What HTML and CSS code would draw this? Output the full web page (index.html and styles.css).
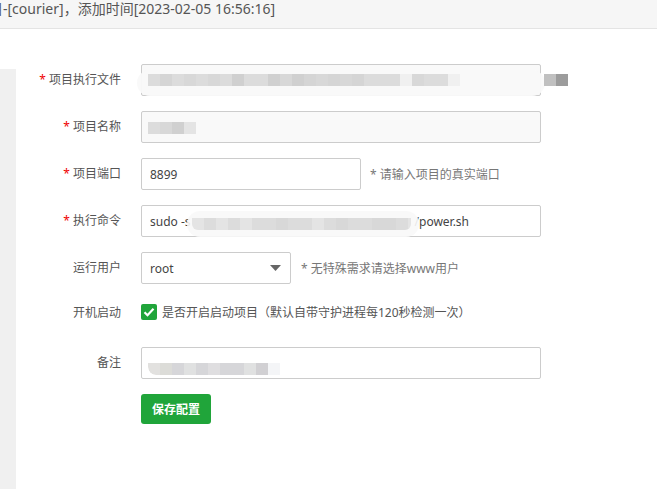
FILE: index.html
```html
<!DOCTYPE html>
<html lang="zh">
<head>
<meta charset="utf-8">
<link rel="stylesheet" href="styles.css">
</head>
<body>
<div class="header"><span class="title">目-[courier]，添加时间[2023-02-05 16:56:16]</span></div>
<div class="main">
  <div class="side"></div>
  <div class="form">
    <div class="row">
      <label class="lbl"><span class="req">*</span> 项目执行文件</label>
      <div class="field">
        <input class="inp wide ro" type="text" readonly>
        <span class="pill pill1"></span>
        <span class="mosaic m1">
          <i class="g1"></i><i class="g2"></i><i class="g1"></i><i class="g4"></i><i class="g1"></i><i class="g4"></i><i class="g1"></i><i class="g3"></i><i class="g1"></i><i class="g1"></i><i class="g3"></i><i class="g4"></i><i class="g3"></i><i class="g2"></i><i class="g4"></i><i class="g2"></i><i class="g4"></i><i class="g2"></i><i class="g1"></i><i class="g1"></i><i class="g1"></i><i class="g6"></i><i class="g4"></i><i class="g1"></i><i class="g1"></i><i class="g6"></i>
        </span>
        <span class="mosaic m1b"><i class="g7"></i><i class="g8"></i></span>
      </div>
    </div>
    <div class="row">
      <label class="lbl"><span class="req">*</span> 项目名称</label>
      <div class="field">
        <input class="inp wide ro" type="text" readonly>
        <span class="mosaic m2"><i class="g1"></i><i class="g4"></i><i class="g3"></i><i class="g5"></i></span>
      </div>
    </div>
    <div class="row">
      <label class="lbl"><span class="req">*</span> 项目端口</label>
      <div class="field">
        <input class="inp port" type="text" value="8899">
      </div>
      <span class="hint">* 请输入项目的真实端口</span>
    </div>
    <div class="row">
      <label class="lbl"><span class="req">*</span> 执行命令</label>
      <div class="field">
        <div class="inp wide cmd"><span>sudo -s</span><span class="gap"></span><span>/power.sh</span></div>
        <span class="pill pill4"></span>
        <span class="mosaic m4">
          <i class="g5"></i><i class="g1"></i><i class="g5"></i><i class="g1"></i><i class="g5"></i><i class="g1"></i><i class="g1"></i><i class="g4"></i><i class="g1"></i><i class="g1"></i><i class="g5"></i><i class="g1"></i><i class="g4"></i><i class="g1"></i><i class="g1"></i><i class="g4"></i><i class="g4"></i><i class="g1"></i><i class="g5 last"></i>
        </span>
      </div>
    </div>
    <div class="row">
      <label class="lbl">运行用户</label>
      <div class="select">
        <span>root</span>
        <svg class="caret" width="11" height="6" viewBox="0 0 11 6"><path d="M0 0h11L5.5 6z" fill="#666"/></svg>
      </div>
      <span class="hint">* 无特殊需求请选择www用户</span>
    </div>
    <div class="row row-check">
      <label class="lbl">开机启动</label>
      <span class="check">
        <svg width="16" height="16" viewBox="0 0 16 16"><rect width="16" height="16" rx="2" fill="#20a53a"/><path d="M3.5 8.2l3 3 6-6.4" fill="none" stroke="#fff" stroke-width="2.2"/></svg>
      </span>
      <span class="check-text">是否开启启动项目（默认自带守护进程每120秒检测一次）</span>
    </div>
    <div class="row row-note">
      <label class="lbl">备注</label>
      <div class="field">
        <input class="inp wide" type="text">
        <span class="mosaic m7">
          <i class="n1 first"></i><i class="n2"></i><i class="n3"></i><i class="n4"></i><i class="n3"></i><i class="n5"></i><i class="n3"></i><i class="n3"></i><i class="n4"></i><i class="n6"></i><i class="n7"></i>
        </span>
      </div>
    </div>
    <div class="row row-btn">
      <span class="lbl"></span>
      <button class="btn" type="button">保存配置</button>
    </div>
  </div>
</div>
</body>
</html>
```

FILE: styles.css
```css
* { box-sizing: border-box; }
html, body { margin: 0; padding: 0; background: #fff; }
body {
  width: 657px;
  height: 489px;
  overflow: hidden;
  font-family: "Noto Sans", "Noto Sans CJK SC", sans-serif;
  color: #555;
  font-size: 12px;
}
.header {
  height: 29px;
  background: #f6f6f6;
  border-bottom: 1px solid #e4e4e4;
  overflow: hidden;
  white-space: nowrap;
}
.title {
  display: block;
  margin-left: -11px;
  font-size: 14px;
  line-height: 18px;
  color: #555;
}
.main {
  display: flex;
  height: 460px;
}
.side {
  width: 16px;
  margin-top: 40px;
  background: #f0f0f0;
  flex: none;
}
.form {
  padding-top: 35px;
  display: flex;
  flex-direction: column;
  gap: 15px;
}
.row {
  display: flex;
  align-items: center;
  height: 32px;
}
.lbl {
  width: 125px;
  padding-right: 20px;
  text-align: right;
  color: #555;
  flex: none;
  line-height: 18px;
}
.req { color: #ef0000; }
.field { position: relative; height: 32px; }
.inp {
  height: 32px;
  border: 1px solid #ccc;
  border-radius: 2px;
  padding: 0 8px;
  font: inherit;
  font-size: 12px;
  color: #444;
  background: #fff;
  outline: none;
  display: block;
}
.wide { width: 400px; }
.port { width: 220px; }
.ro { background: #f9f9f9; }
.cmd {
  display: flex;
  align-items: center;
}
.cmd .gap { width: 224px; flex: none; }
.hint {
  margin-left: 9px;
  color: #777;
}
.row .select + .hint { margin-left: 10px; }
.select {
  width: 150px;
  height: 32px;
  border: 1px solid #ccc;
  border-radius: 2px;
  padding: 0 8px;
  display: flex;
  align-items: center;
  justify-content: space-between;
  color: #444;
}
.caret { margin-right: 1px; }
.row-check { height: 28px; }
.check { width: 16px; height: 16px; display: block; margin-top: -3px; }
.check svg { display: block; }
.check-text { margin-left: 5px; color: #555; margin-top: -3px; }
.row-note { margin-top: 5px; }
.btn {
  width: 70px;
  height: 30px;
  border: 0;
  border-radius: 3px;
  background: #20a53a;
  color: #fff;
  font: inherit;
  font-size: 12px;
  font-weight: 600;
  padding: 0;
}
.row-btn { height: 30px; }

.pill {
  position: absolute;
  background: rgba(249, 249, 249, 0.96);
  border-radius: 14px;
}
.pill1 { left: -4px; top: 6px; width: 408px; height: 26px; }
.pill4 { left: 46px; top: 6px; width: 232px; height: 26px; background: rgba(248,248,248,0.9); }
.mosaic {
  position: absolute;
  display: flex;
  height: 12px;
}
.mosaic i { display: block; width: 12px; height: 12px; }
.m1 { left: 7px; top: 10px; }
.m1b { left: 403px; top: 10px; }
.m2 { left: 7px; top: 11px; }
.m4 { left: 51px; top: 13px; border-radius: 0 0 6px 6px; overflow: hidden; }
.m4 i.last { width: 3px; }
.m7 { left: 7px; top: 16px; border-radius: 0 0 0 8px; overflow: hidden; }
.m7 i.first { border-bottom-left-radius: 8px; }
.g1 { background: #dcdcdc; }
.g2 { background: #d5d5d5; }
.g3 { background: #d0d0d0; }
.g4 { background: #d8d8d8; }
.g5 { background: #e4e4e4; }
.g6 { background: #f0f0f0; }
.g7 { background: #c0c0c0; }
.g8 { background: #9c9c9c; }
.n1 { background: #e2e1df; }
.n2 { background: #dcdcd8; }
.n3 { background: #d6d6d9; }
.n4 { background: #e0e1e1; }
.n5 { background: #dfdee0; }
.n6 { background: #d1d0d3; }
.n7 { background: #f4f5f7; }
```
